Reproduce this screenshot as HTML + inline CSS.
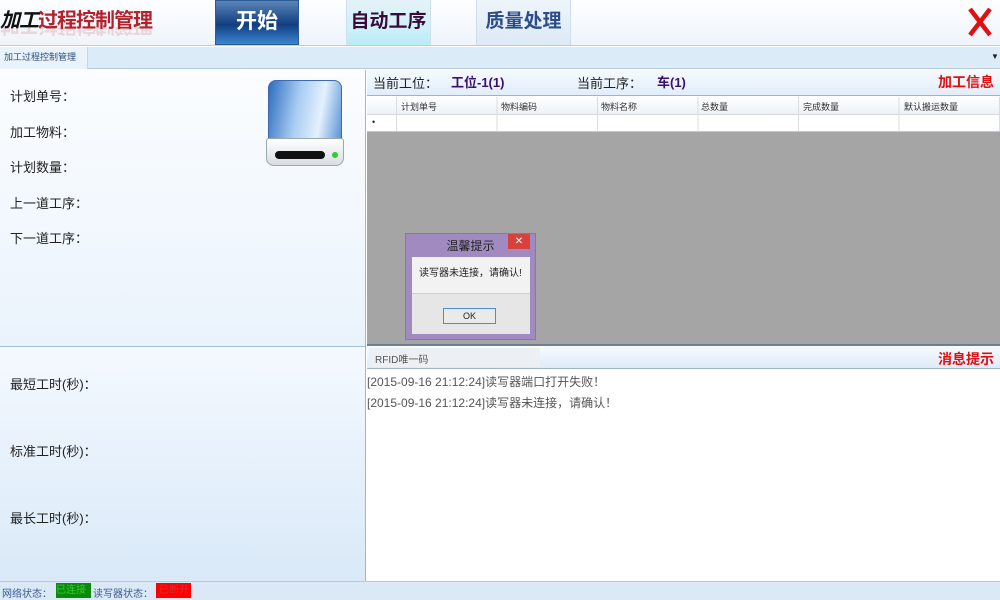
<!DOCTYPE html>
<html><head><meta charset="utf-8"><style>
*{margin:0;padding:0;box-sizing:border-box}
body{width:1000px;height:600px;overflow:hidden;position:relative;font-family:"Liberation Sans","Noto Sans CJK SC",sans-serif;background:#fff;font-size:12px;color:#222}
.a{position:absolute}
</style></head><body>
<div class="a" style="left:0;top:0;width:1000px;height:46px;background:linear-gradient(#fdfeff,#eef4fb);border-bottom:1px solid #b8cde4"></div>
<div class="a" style="left:0;top:4px;font-size:20px;font-weight:bold;font-style:italic;letter-spacing:-1px"><span style="color:#111">加工</span><span style="color:#b3222c;font-style:normal">过程控制管理</span></div>
<div class="a" style="left:0;top:27px;height:12px;overflow:hidden;width:170px"><div style="font-size:20px;font-weight:bold;letter-spacing:-1px;transform:scaleY(-1);opacity:.15;color:#b3222c;margin-top:-14px">加工过程控制管理</div></div>
<div class="a" style="left:215px;top:0;width:84px;height:45px;background:linear-gradient(#5b84b8,#123e80 55%,#3a86d0);border:1px solid #2a5a94;color:#fff;font-size:21px;font-weight:bold;text-align:center;line-height:42px">开始</div>
<div class="a" style="left:346px;top:0;width:85px;height:45px;background:linear-gradient(#e3f3f8,#d0f0f8 60%,#b8ecf6);border-left:1px solid #cfe0ea;border-right:1px solid #cfe0ea;color:#3a0a3a;font-size:19px;font-weight:bold;text-align:center;line-height:44px">自动工序</div>
<div class="a" style="left:476px;top:0;width:95px;height:45px;background:linear-gradient(#eef5fb,#dde9f6);border-left:1px solid #cfdcea;border-right:1px solid #cfdcea;color:#2d4d8a;font-size:19px;font-weight:bold;text-align:center;line-height:44px">质量处理</div>
<svg class="a" style="left:967px;top:7px" width="26" height="30"><path d="M3 2 L23 28 M23 2 L3 28" stroke="#e01010" stroke-width="4.5"/></svg>
<div class="a" style="left:0;top:47px;width:1000px;height:22px;background:#dcebf8;border-bottom:1px solid #b6cbe2"></div>
<div class="a" style="left:0;top:47px;width:88px;height:22px;background:#eaf3fc;border-right:1px solid #c4d6ea;font-size:9px;color:#2a4c7c;line-height:20px;padding-left:4px">加工过程控制管理</div>
<div class="a" style="left:991px;top:52px;font-size:8px">▼</div>
<div class="a" style="left:0;top:70px;width:366px;height:276px;background:linear-gradient(#fbfdff,#eaf3fc);border-right:1px solid #9fb6cf"></div>
<div class="a" style="left:10px;top:79px;font-size:13px;line-height:35.5px">计划单号：<br>加工物料：<br>计划数量：<br>上一道工序：<br>下一道工序：</div>
<div class="a" style="left:266px;top:80px;width:78px;height:86px">
<div class="a" style="left:2px;top:0;width:74px;height:60px;border-radius:8px 8px 0 0;background:linear-gradient(100deg,#2f6dc0,#a8cdf2 40%,#e4f1fd 70%,#5a94d8);border:1px solid #3a6ab0"></div>
<div class="a" style="left:0;top:58px;width:78px;height:28px;border-radius:3px 3px 8px 8px;background:linear-gradient(#fff,#d8dde2);border:1px solid #9aa"></div>
<div class="a" style="left:9px;top:71px;width:50px;height:8px;border-radius:4px;background:#111"></div>
<div class="a" style="left:66px;top:72px;width:6px;height:6px;border-radius:3px;background:#3c3"></div></div>
<div class="a" style="left:0;top:346px;width:366px;height:235px;background:linear-gradient(#f4f9fe,#d9e9f8);border-right:1px solid #9fb6cf;border-top:1px solid #a8bfd8"></div>
<div class="a" style="left:10px;top:351px;font-size:13px;line-height:67px">最短工时(秒)：<br>标准工时(秒)：<br>最长工时(秒)：</div>
<div class="a" style="left:367px;top:70px;width:633px;height:26px;background:linear-gradient(#f6faff,#e1edf9);border-bottom:1px solid #9cb3cc"></div>
<div class="a" style="left:373px;top:73px;font-size:13px">当前工位：</div>
<div class="a" style="left:451px;top:72px;font-size:13px;font-weight:bold;color:#3a1070">工位-1(1)</div>
<div class="a" style="left:577px;top:73px;font-size:13px">当前工序：</div>
<div class="a" style="left:657px;top:72px;font-size:13px;font-weight:bold;color:#3a1070">车(1)</div>
<div class="a" style="left:938px;top:72px;font-size:14px;font-weight:bold;color:#e01010">加工信息</div>
<div class="a" style="left:367px;top:97px;width:633px;height:249px;background:#a5a5a5;border-bottom:2px solid #6c7f95"></div>
<div class="a" style="left:367px;top:97px;width:633px;height:35px;background:#fff"></div>
<div class="a" style="left:367px;top:97px;width:633px;height:18px;background:linear-gradient(#fff,#eef2f6);border-bottom:1px solid #d4d8dd;font-size:9px;color:#333">
<span class="a" style="left:34px;top:3px">计划单号</span><span class="a" style="left:134px;top:3px">物料编码</span><span class="a" style="left:234px;top:3px">物料名称</span><span class="a" style="left:334px;top:3px">总数量</span><span class="a" style="left:436px;top:3px">完成数量</span><span class="a" style="left:537px;top:3px">默认搬运数量</span></div>
<div class="a" style="left:396px;top:97px;width:604px;height:35px;background:repeating-linear-gradient(90deg,#d9dde2 0 1px,transparent 1px 100.5px)"></div>
<div class="a" style="left:372px;top:117px;font-size:9px">•</div>
<div class="a" style="left:367px;top:131px;width:633px;height:1px;background:#c8c8c8"></div>
<div class="a" style="left:405px;top:233px;width:131px;height:107px;background:#a08ac0;border:1px solid #8a74a8"></div>
<div class="a" style="left:405px;top:237px;width:131px;text-align:center;font-size:12px;color:#222">温馨提示</div>
<div class="a" style="left:508px;top:234px;width:22px;height:15px;background:#d8423c;color:#fff;font-size:10px;text-align:center;line-height:15px">✕</div>
<div class="a" style="left:412px;top:257px;width:118px;height:36px;background:#f2f2f2;font-size:10px;padding:7px 0 0 7px">读写器未连接，请确认!</div>
<div class="a" style="left:412px;top:293px;width:118px;height:41px;background:#e6e6e6;border-top:1px solid #d0d0d0"></div>
<div class="a" style="left:443px;top:308px;width:53px;height:16px;border:1px solid #4a8ed8;background:#eaeaea;font-size:9px;text-align:center;line-height:14px">OK</div>
<div class="a" style="left:367px;top:347px;width:633px;height:22px;background:linear-gradient(#f6faff,#dfebf8);border-bottom:1px solid #9cb3cc"></div>
<div class="a" style="left:369px;top:348px;width:171px;height:19px;background:#eceff3;font-size:10px;color:#555;padding:3px 0 0 6px">RFID唯一码</div>
<div class="a" style="left:938px;top:349px;font-size:14px;font-weight:bold;color:#e01010">消息提示</div>
<div class="a" style="left:367px;top:372px;font-size:12px;color:#555;line-height:21px">[2015-09-16 21:12:24]读写器端口打开失败！<br>[2015-09-16 21:12:24]读写器未连接，请确认！</div>
<div class="a" style="left:0;top:581px;width:1000px;height:19px;background:#dbe8f6;border-top:1px solid #b5c9df;font-size:10px;color:#3a5c94"></div>
<div class="a" style="left:2px;top:585px;font-size:10px;color:#3a5c94">网络状态：</div>
<div class="a" style="left:56px;top:583px;width:35px;height:15px;background:#0a8a0a;font-size:10px;color:#3c3;line-height:15px">已连接</div>
<div class="a" style="left:93px;top:585px;font-size:10px;color:#3a5c94">读写器状态：</div>
<div class="a" style="left:156px;top:583px;width:35px;height:15px;background:#f00;font-size:10px;color:#c33;line-height:15px;padding-left:3px">已断开</div>
</body></html>
